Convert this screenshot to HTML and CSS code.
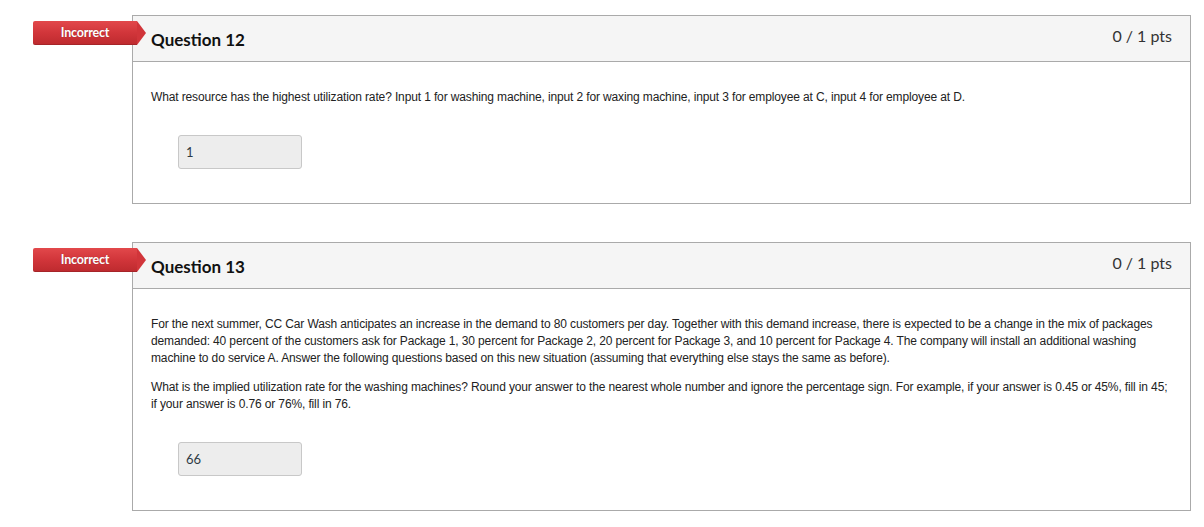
FILE: index.html
```html
<!DOCTYPE html>
<html lang="en">
<head>
<meta charset="utf-8">
<title>Quiz results</title>
<link rel="stylesheet" href="styles.css">
</head>
<body>
<main class="quiz">
  <section class="question">
    <div class="badge">Incorrect</div>
    <header class="q-header">
      <h2 class="q-title">Question 12</h2>
      <span class="q-points">0 / 1 pts</span>
    </header>
    <div class="q-body">
      <p>What resource has the highest utilization rate? Input 1 for washing machine, input 2 for waxing machine, input 3 for employee at C, input 4 for employee at D.</p>
      <div class="answer"><div class="answer-box">1</div></div>
    </div>
  </section>

  <section class="question">
    <div class="badge">Incorrect</div>
    <header class="q-header">
      <h2 class="q-title">Question 13</h2>
      <span class="q-points">0 / 1 pts</span>
    </header>
    <div class="q-body">
      <p>For the next summer, CC Car Wash anticipates an increase in the demand to 80 customers per day. Together with this demand increase, there is expected to be a change in the mix of packages demanded: 40 percent of the customers ask for Package 1, 30 percent for Package 2, 20 percent for Package 3, and 10 percent for Package 4. The company will install an additional washing machine to do service A. Answer the following questions based on this new situation (assuming that everything else stays the same as before).</p>
      <p>What is the implied utilization rate for the washing machines? Round your answer to the nearest whole number and ignore the percentage sign. For example, if your answer is 0.45 or 45%, fill in 45; if your answer is 0.76 or 76%, fill in 76.</p>
      <div class="answer"><div class="answer-box">66</div></div>
    </div>
  </section>
</main>
</body>
</html>
```

FILE: styles.css
```css
html, body {
  margin: 0;
  padding: 0;
  background: #fff;
}

body {
  font-family: "Liberation Sans", Arial, sans-serif;
  color: #2d3b45;
}

.quiz {
  display: flex;
  flex-direction: column;
  gap: 38px;
  padding: 15px 13px 0 132px;
}

.question {
  position: relative;
  border: 1px solid #aaaaaa;
  background: #fff;
}

.badge {
  position: absolute;
  top: 5px;
  left: -100px;
  width: 104px;
  height: 24px;
  line-height: 23px;
  text-align: center;
  font-family: Lato, "Noto Sans", sans-serif;
  font-weight: 700;
  font-size: 12.5px;
  letter-spacing: -0.2px;
  color: #fff;
  text-shadow: 0 0 1px rgba(0, 0, 0, 0.3);
  background: linear-gradient(to bottom, #e2484b 0%, #d1353a 50%, #bd2a2e 100%);
  border-radius: 2px 0 0 2px;
  box-shadow: inset 0 -1px 0 rgba(0, 0, 0, 0.12);
}

.badge::after {
  content: "";
  position: absolute;
  top: 0;
  right: -9px;
  width: 0;
  height: 0;
  border-top: 12px solid transparent;
  border-bottom: 12px solid transparent;
  border-left: 9px solid #d1353a;
}

.q-header {
  display: flex;
  justify-content: space-between;
  align-items: flex-start;
  height: 45px;
  background: #f5f5f5;
  border-bottom: 1px solid #aaaaaa;
  padding: 0 18px;
}

.q-title {
  margin: 0;
  padding-top: 13px;
  font-family: Lato, "Noto Sans", sans-serif;
  font-weight: 700;
  font-size: 17px;
  line-height: 22px;
  color: #111;
}

.q-points {
  padding-top: 10px;
  font-family: Lato, "Noto Sans", sans-serif;
  font-size: 16px;
  line-height: 20px;
  color: #333;
}

.q-body {
  padding: 27px 18px 34px;
}

.q-body p {
  margin: 0 0 12px;
  font-size: 12px;
  letter-spacing: -0.13px;
  line-height: 17px;
  color: #222;
}

.answer {
  padding: 17px 0 0 27px;
}

.answer-box {
  box-sizing: border-box;
  width: 124px;
  height: 34px;
  padding: 0 7px;
  background: #ededed;
  border: 1px solid #c8c8c8;
  border-radius: 3px;
  font-family: Lato, "Noto Sans", sans-serif;
  font-size: 13px;
  line-height: 32px;
  color: #2d3b45;
}
```
